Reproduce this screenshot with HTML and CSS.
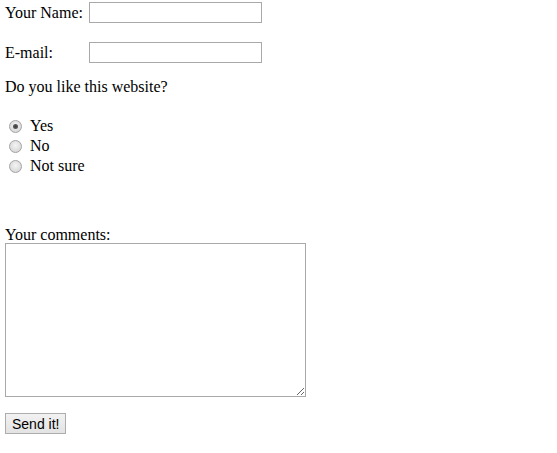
FILE: index.html
```html
<!DOCTYPE html>
<html>
<head>
<meta charset="utf-8">
<link rel="stylesheet" href="styles.css">
</head>
<body>
<form class="form">
  <div class="field">
    <label class="label" for="name">Your Name:</label>
    <input class="text" id="name" type="text">
  </div>
  <div class="field field-mail">
    <label class="label" for="mail">E-mail:</label>
    <input class="text" id="mail" type="text">
  </div>
  <p class="question">Do you like this website?</p>
  <div class="radios">
    <label class="radio-row"><input class="radio" type="radio" name="like" checked><span>Yes</span></label>
    <label class="radio-row"><input class="radio" type="radio" name="like"><span>No</span></label>
    <label class="radio-row"><input class="radio" type="radio" name="like"><span>Not sure</span></label>
  </div>
  <div class="comments">
    <label class="comments-label" for="c">Your comments:</label>
    <textarea class="area" id="c"></textarea>
  </div>
  <div class="actions">
    <button class="btn" type="button">Send it!</button>
  </div>
</form>
</body>
</html>
```

FILE: styles.css
```css
html, body {
  margin: 0;
  padding: 0;
  background: #fff;
}
body {
  font-family: "Liberation Serif", "Times New Roman", serif;
  font-size: 16px;
  color: #000;
}
.form {
  padding: 2px 0 0 5px;
  display: flex;
  flex-direction: column;
  align-items: flex-start;
}
.field {
  display: flex;
  align-items: center;
  height: 21px;
}
.field-mail {
  margin-top: 19px;
}
.label {
  width: 84px;
}
.text {
  box-sizing: border-box;
  width: 173px;
  height: 21px;
  margin: 0;
  border: 1px solid #a9a9a9;
  padding: 1px 2px;
  font: inherit;
  outline: none;
}
.question {
  margin: 15px 0 0 0;
  line-height: 18px;
}
.radios {
  margin-top: 20px;
  display: flex;
  flex-direction: column;
}
.radio-row {
  display: flex;
  align-items: center;
  height: 20px;
}
.radio {
  appearance: none;
  -webkit-appearance: none;
  box-sizing: border-box;
  width: 13px;
  height: 13px;
  margin: 0 8px 0 4px;
  border-radius: 50%;
  border: 1px solid #a3a3a3;
  background: radial-gradient(circle at 50% 40%, #f4f4f4 0%, #dedede 60%, #d2d2d2 100%);
  position: relative;
}
.radio:checked::after {
  content: "";
  position: absolute;
  left: 3px;
  top: 3px;
  width: 5px;
  height: 5px;
  border-radius: 50%;
  background: radial-gradient(circle, #404040 0%, #5a5a5a 70%, #7a7a7a 100%);
}
.comments {
  margin-top: 50px;
  display: flex;
  flex-direction: column;
}
.comments-label {
  line-height: 17px;
}
.area {
  box-sizing: border-box;
  width: 301px;
  height: 154px;
  margin: 0;
  border: 1px solid #a9a9a9;
  resize: both;
  outline: none;
}
.actions {
  margin-top: 16px;
}
.btn {
  box-sizing: border-box;
  height: 21px;
  margin: 0;
  padding: 0 6px;
  white-space: nowrap;
  font-family: "Liberation Sans", Arial, sans-serif;
  font-size: 14px;
  color: #000;
  border: 1px solid #adadad;
  border-radius: 0;
  background: linear-gradient(#f2f2f2, #e3e3e3);
}
```
